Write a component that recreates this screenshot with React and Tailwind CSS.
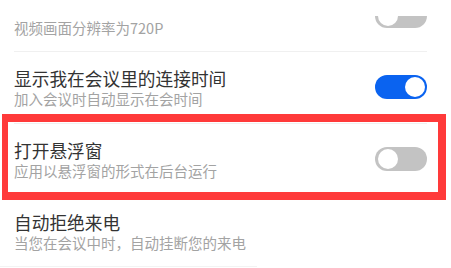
import React from "react";

function Toggle({ on }) {
  return on ? (
    <div className="w-[52px] h-[24px] rounded-full bg-[#0a63f0] flex items-center justify-end px-[2.5px] shrink-0">
      <div className="w-[20px] h-[20px] rounded-full bg-white" />
    </div>
  ) : (
    <div className="w-[52px] h-[24px] rounded-full bg-[#c3c3c3] flex items-center justify-start px-[2.5px] shrink-0">
      <div className="w-[20px] h-[20px] rounded-full bg-white" />
    </div>
  );
}

function Row({ title, sub, on, border = true, toggle = true }) {
  return (
    <div
      className={
        "h-[71.5px] flex items-center justify-between " +
        (border ? "border-b border-[#f0f0f0]" : "")
      }
    >
      <div className="flex flex-col pt-[3px]">
        <div className="h-[21px] text-[17.7px] leading-[21px] text-[#333333]">{title}</div>
        <div className="text-[14.5px] leading-[20px] text-[#a3a3a3]">{sub}</div>
      </div>
      {toggle && <Toggle on={on} />}
    </div>
  );
}

export default function App() {
  return (
    <div
      className="relative w-[451px] h-[268px] overflow-hidden bg-white"
      style={{ fontFamily: '"Noto Sans CJK SC", "Noto Sans", sans-serif' }}
    >
      <div className="mt-[-19.5px] pl-[14px] pr-[24px]">
        <Row title="" sub="视频画面分辨率为720P" on={false} />
        <Row title="显示我在会议里的连接时间" sub="加入会议时自动显示在会时间" on={true} />
        <Row title="打开悬浮窗" sub="应用以悬浮窗的形式在后台运行" on={false} />
        <Row title="自动拒绝来电" sub="当您在会议中时，自动挂断您的来电" border={false} toggle={false} />
      </div>
      <div className="w-[257px] h-px bg-[#f3f3f3] mt-[-1px]" />
      <div className="absolute top-0 left-0 right-0 h-[16px] bg-white" />
      <div className="absolute left-[2px] top-[113.5px] w-[444px] h-[86px] border-[#ff3a3a] border-t-[8px] border-b-[8px] border-l-[6px] border-r-[8px]" />
    </div>
  );
}
